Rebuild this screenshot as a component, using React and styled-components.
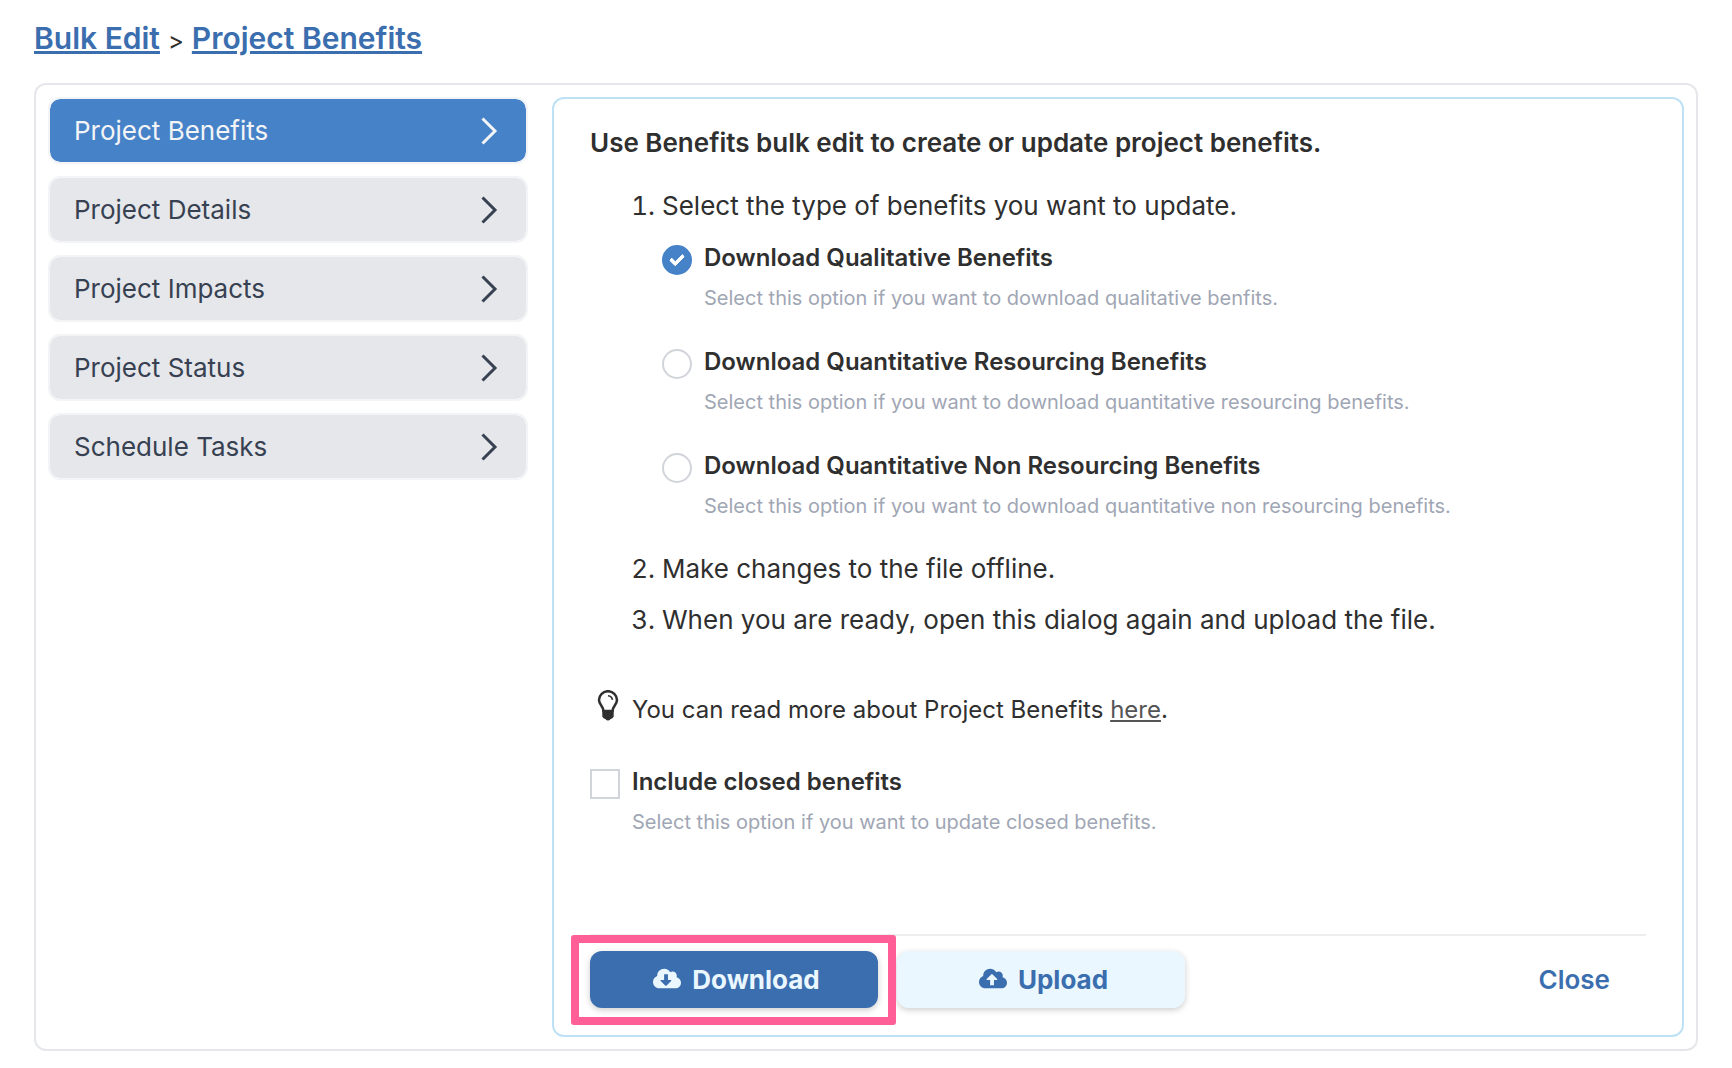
import React, { useState } from "react";
import styled, { createGlobalStyle } from "styled-components";

const GlobalStyle = createGlobalStyle`
  *, *::before, *::after { box-sizing: border-box; }
  body {
    margin: 0;
    background: #fff;
    color: #2f2f2f;
    font-family: Inter, "Liberation Sans", sans-serif;
    font-size: 26px;
  }
  button, input { font: inherit; }
`;

const Page = styled.main`
  min-height: 100vh;
  padding: 16px 34px;
`;

const Breadcrumb = styled.nav`
  display: flex;
  align-items: baseline;
  gap: 8px;
  height: 44px;
  line-height: 44px;
  margin-bottom: 23px;
  font-size: 24px;
`;

const Crumb = styled.a`
  color: #3b6eae;
  font-size: 30px;
  font-weight: 600;
  text-decoration: underline;
`;

const Card = styled.div`
  display: grid;
  grid-template-columns: 480px minmax(0, 1fr);
  gap: 24px;
  padding: 12px;
  border: 2px solid #e5e7eb;
  border-radius: 12px;
`;

const Menu = styled.nav`
  display: flex;
  flex-direction: column;
  gap: 12px;
`;

const MenuItem = styled.button`
  display: flex;
  align-items: center;
  justify-content: space-between;
  height: 67px;
  padding: 0 28px 0 24px;
  border: 2px solid #f3f4f6;
  border-radius: 12px;
  background: ${(p) => (p.$active ? "#4682c8" : "#e5e7eb")};
  background-clip: padding-box;
  color: ${(p) => (p.$active ? "#f3f4f6" : "#374151")};
  text-align: left;
  cursor: pointer;
`;

const Panel = styled.section`
  padding: 24px 36px 27px;
  border: 2px solid #bfe1f6;
  border-radius: 12px;
`;

const Title = styled.h1`
  margin: 0 0 23px;
  font-size: 26px;
  line-height: 40px;
  font-weight: 600;
`;

const Steps = styled.ol`
  margin: 0 0 50px;
  padding-left: 72px;
  line-height: 40px;
`;

const Step = styled.li`
  margin-bottom: 11px;
`;

const Options = styled.div`
  display: grid;
  gap: 24px;
  margin: 12px 0 23px;
`;

const Option = styled.div`
  display: grid;
  grid-template-columns: 30px minmax(0, 1fr);
  column-gap: 12px;
`;

const OptionLabel = styled.label`
  font-size: 24px;
  line-height: 40px;
  font-weight: 600;
`;

const Hint = styled.p`
  grid-column: 2;
  margin: 0;
  color: #9fa6b4;
  font-size: 20px;
  line-height: 40px;
`;

const Control = styled.input`
  appearance: none;
  display: grid;
  place-items: center;
  width: 30px;
  height: 30px;
  margin: 7px 0 0;
  border: 2px solid #d1d5db;
  border-radius: ${(p) => (p.type === "radio" ? "50%" : "0")};
  background: #fff;

  &:checked {
    border-color: #4682c8;
    background: #4682c8;
  }
  &:checked::after {
    content: "";
    width: 14px;
    height: 9px;
    margin-bottom: 4px;
    border: solid #fff;
    border-width: 0 0 4px 4px;
    border-radius: 2px;
    transform: rotate(-45deg);
  }
`;

const Tip = styled.p`
  display: flex;
  gap: 12px;
  margin: 0 0 32px;
  font-size: 24px;
  line-height: 40px;
`;

const TipIcon = styled.svg`
  flex: none;
  width: 24px;
  height: 32px;
  margin-left: 6px;
`;

const TipLink = styled.a`
  color: #555;
`;

const Footer = styled.footer`
  display: flex;
  align-items: flex-start;
  gap: 19px;
  margin-top: 92px;
  padding-top: 15px;
  border-top: 2px solid #eee;
`;

const Spotlight = styled.span`
  position: relative;
  display: flex;

  &::after {
    content: "";
    position: absolute;
    inset: -16px -18px -17px -19px;
    border: 8px solid #ff5f96;
    border-radius: 3px;
    pointer-events: none;
  }
`;

const ActionButton = styled.button`
  display: flex;
  align-items: center;
  justify-content: center;
  gap: 11px;
  width: 288px;
  height: 57px;
  padding: 0 0 0 5px;
  border: 0;
  border-radius: 12px;
  background: ${(p) => (p.$primary ? "#3b6eae" : "#ebf7fe")};
  color: ${(p) => (p.$primary ? "#ebf7fe" : "#3b6eae")};
  box-shadow: 0 2px 6px rgba(0, 0, 0, 0.2);
  font-weight: 700;
  cursor: pointer;

  svg { width: 28px; height: 23px; margin-bottom: 3px; }
  .arrow { fill: ${(p) => (p.$primary ? "#3b6eae" : "#ebf7fe")}; }
`;

const CloseButton = styled.button`
  height: 57px;
  margin-left: auto;
  padding: 0 36px;
  border: 0;
  background: none;
  color: #3b6eae;
  font-weight: 600;
  cursor: pointer;
`;

const Chevron = () => (
  <svg width="18" height="28" viewBox="0 0 18 28" fill="none" stroke="currentColor" strokeWidth="3" aria-hidden="true">
    <path d="M2.5 1.5 15 14 2.5 26.5" />
  </svg>
);

const Bulb = () => (
  <TipIcon viewBox="0 0 24 32" aria-hidden="true">
    <path d="M7.500 21C7.500 16.500 3 14.500 3 10a9 8.800 0 0 1 18 0C21 14.500 16.500 16.500 16.500 21Z" fill="none" stroke="currentColor" strokeWidth="2.500" />
    <path d="M12 5.800q4 .4 4.400 4" fill="none" stroke="currentColor" strokeWidth="1.600" />
    <path d="M6.300 20h11.400v6.500q-1 2-3 2.500-2.700 3-5.400 0-2-.5-3-2.500Z" fill="currentColor" />
  </TipIcon>
);

const CloudIcon = ({ up }) => (
  <svg viewBox="0 0 640 512" fill="currentColor" aria-hidden="true">
    <path d="M537.600 226.600c4.100-10.700 6.400-22.400 6.400-34.600 0-53-43-96-96-96-19.700 0-38.100 6-53.300 16.200C367 64.200 315.300 32 256 32c-88.400 0-160 71.600-160 160 0 2.700.1 5.400.2 8.100C40.200 219.800 0 273.200 0 336c0 79.500 64.500 144 144 144h368c70.700 0 128-57.300 128-128 0-61.900-44-113.600-102.400-125.400z" />
    <path
      className="arrow"
      d={up
        ? "M254 410V290H182q-20-4-6-24L285 158q10-8 20 0L414 266q14 20-6 24H342V410Z"
        : "M254 158V288H182q-20 4-6 24L285 420q10 8 20 0L414 312q14-20-6-24H342V158Z"}
    />
  </svg>
);

const MENU = ["Project Benefits", "Project Details", "Project Impacts", "Project Status", "Schedule Tasks"];

const OPTIONS = [
  { id: "qualitative", label: "Download Qualitative Benefits", hint: "Select this option if you want to download qualitative benfits." },
  { id: "resourcing", label: "Download Quantitative Resourcing Benefits", hint: "Select this option if you want to download quantitative resourcing benefits." },
  { id: "non-resourcing", label: "Download Quantitative Non Resourcing Benefits", hint: "Select this option if you want to download quantitative non resourcing benefits." },
];

export default function App() {
  const [section, setSection] = useState(MENU[0]);
  const [type, setType] = useState("qualitative");

  return (
    <Page>
      <GlobalStyle />
      <Breadcrumb aria-label="Breadcrumb">
        <Crumb href="#bulk-edit">Bulk Edit</Crumb>
        <span>&gt;</span>
        <Crumb href="#project-benefits">Project Benefits</Crumb>
      </Breadcrumb>
      <Card>
        <Menu>
          {MENU.map((name) => (
            <MenuItem key={name} type="button" $active={name === section} onClick={() => setSection(name)}>
              {name}
              <Chevron />
            </MenuItem>
          ))}
        </Menu>
        <Panel>
          <Title>Use Benefits bulk edit to create or update project benefits.</Title>
          <Steps>
            <Step>
              Select the type of benefits you want to update.
              <Options>
                {OPTIONS.map((o) => (
                  <Option key={o.id}>
                    <Control type="radio" name="type" id={o.id} checked={type === o.id} onChange={() => setType(o.id)} />
                    <OptionLabel htmlFor={o.id}>{o.label}</OptionLabel>
                    <Hint>{o.hint}</Hint>
                  </Option>
                ))}
              </Options>
            </Step>
            <Step>Make changes to the file offline.</Step>
            <Step>When you are ready, open this dialog again and upload the file.</Step>
          </Steps>
          <Tip>
            <Bulb />
            <span>
              You can read more about Project Benefits <TipLink href="#help">here</TipLink>.
            </span>
          </Tip>
          <Option>
            <Control type="checkbox" id="closed" />
            <OptionLabel htmlFor="closed">Include closed benefits</OptionLabel>
            <Hint>Select this option if you want to update closed benefits.</Hint>
          </Option>
          <Footer>
            <Spotlight>
              <ActionButton type="button" $primary>
                <CloudIcon />
                Download
              </ActionButton>
            </Spotlight>
            <ActionButton type="button">
              <CloudIcon up />
              Upload
            </ActionButton>
            <CloseButton type="button">Close</CloseButton>
          </Footer>
        </Panel>
      </Card>
    </Page>
  );
}
